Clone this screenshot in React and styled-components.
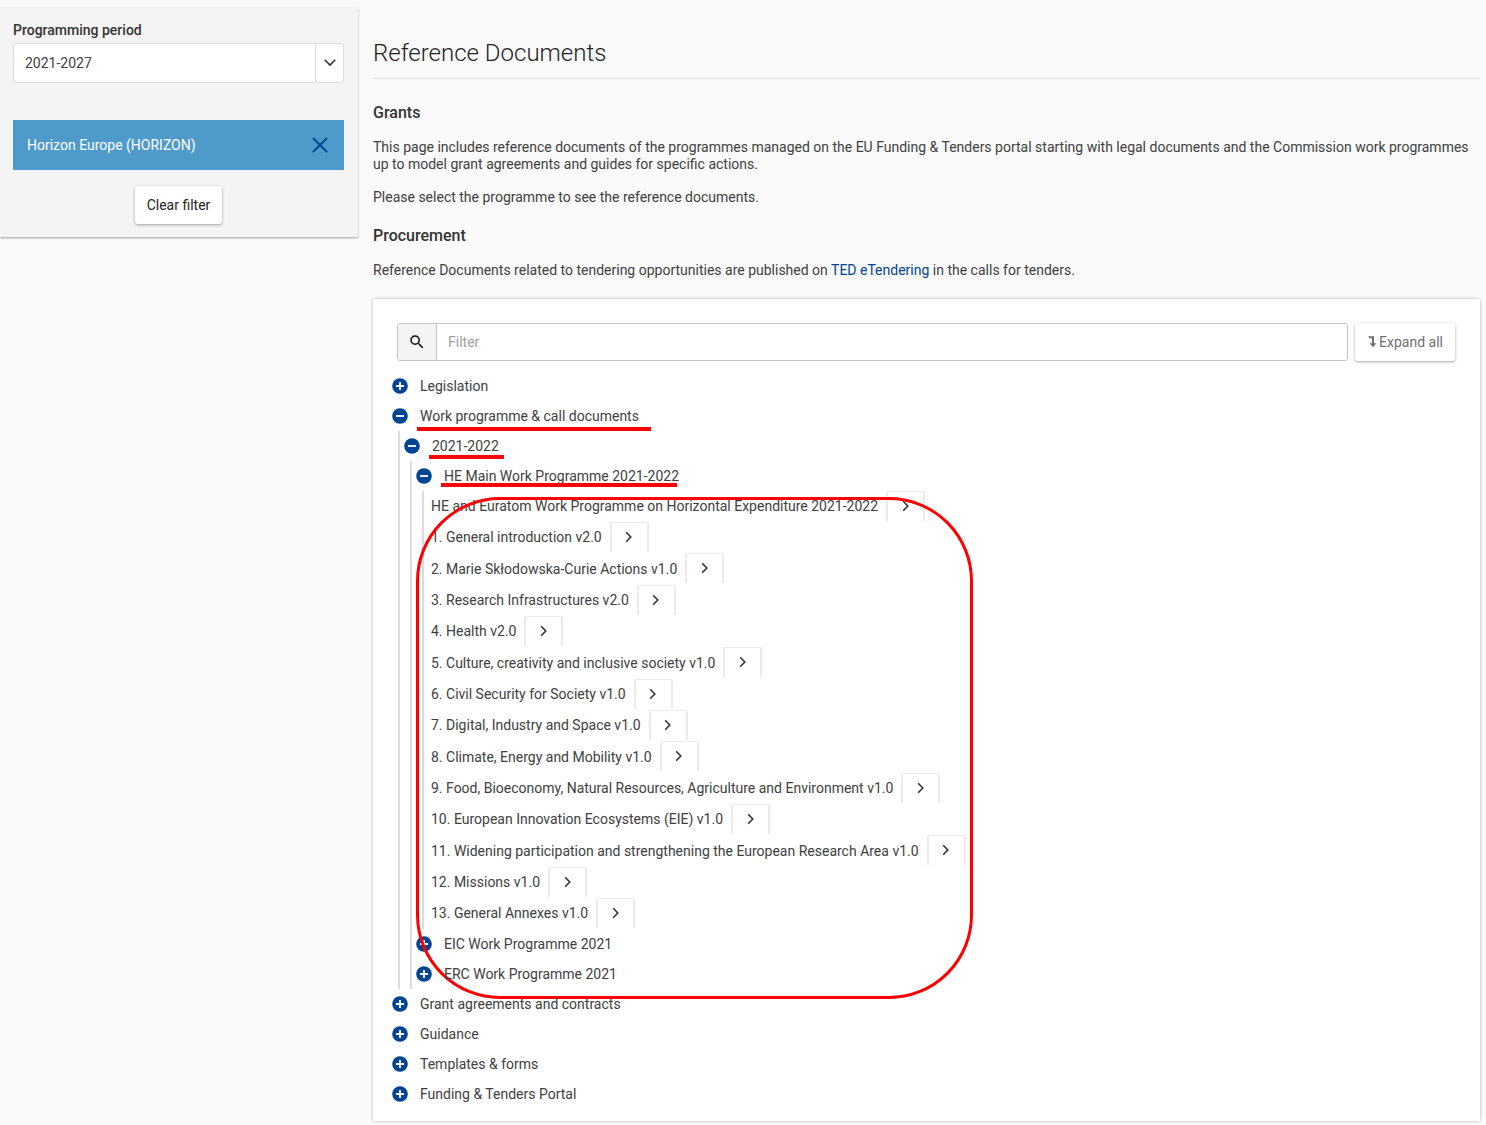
import React, { useState } from "react";
import styled, { createGlobalStyle, css } from "styled-components";

const GlobalStyle = createGlobalStyle`
  *, *::before, *::after { box-sizing: border-box; }
  body {
    margin: 0;
    background: #fafafa;
    color: #404040;
    font: 14px/17px Roboto, "Liberation Sans", sans-serif;
  }
  button, input, select { font: inherit; color: inherit; }
  h1, h2, p, ul { margin: 0; padding: 0; }
  ul { list-style: none; }
`;

const Page = styled.div`
  display: flex;
  align-items: flex-start;
  gap: 15px;
  padding: 8px 6px 4px 0;
`;

const Sidebar = styled.aside`
  flex: 0 0 358px;
  display: flex;
  flex-direction: column;
  padding: 14px 14px 13px 13px;
  background: #f4f4f4;
  box-shadow: 0 1px 2px rgba(0, 0, 0, 0.35);
`;

const FieldLabel = styled.label`
  padding-bottom: 4px;
  font-weight: 500;
  color: #333;
`;

const SelectBox = styled.div`
  display: grid;
  grid-template-columns: 1fr 28px;
  height: 40px;
  background: #fff;
  border: 1px solid #dcdcdc;
  border-radius: 3px;
`;

const Select = styled.select`
  grid-area: 1 / 1 / 2 / 3;
  appearance: none;
  padding: 0 11px;
  background: transparent;
  border: 0;
`;

const SelectArrow = styled.span`
  grid-area: 1 / 2;
  display: grid;
  place-items: center;
  border-left: 1px solid #dcdcdc;
  pointer-events: none;
`;

const Chip = styled.div`
  display: flex;
  align-items: center;
  justify-content: space-between;
  height: 50px;
  margin: 37px 0 16px;
  padding: 0 14px;
  background: #4e9acb;
  color: #fff;
`;

const ChipRemove = styled.button`
  display: grid;
  place-items: center;
  padding: 0;
  background: none;
  border: 0;
  color: #004494;
`;

const Button = styled.button`
  display: flex;
  align-items: center;
  justify-content: center;
  gap: 2px;
  height: 38px;
  padding: 0 12px;
  background: #fff;
  border: 0;
  border-radius: 3px;
  box-shadow: 0 1px 3px rgba(0, 0, 0, 0.35);
  color: ${(p) => (p.$muted ? "#707070" : "#222")};
  align-self: center;
  white-space: nowrap;
`;

const Main = styled.main`
  flex: 1;
  min-width: 0;
  padding-top: 28px;
`;

const Title = styled.h1`
  padding-bottom: 8px;
  border-bottom: 1px solid #dcdcdc;
  font-size: 24px;
  line-height: 34px;
  font-weight: 300;
  color: #222;
`;

const Heading = styled.h2`
  margin: ${(p) => (p.$first ? 24 : 20)}px 0 16px;
  font-size: 16px;
  line-height: 20px;
  font-weight: 500;
  color: #333;
`;

const Text = styled.p`
  & + & { margin-top: 16px; }
`;

const Link = styled.a`
  color: #004494;
  text-decoration: none;
`;

const Card = styled.section`
  margin-top: 20px;
  padding: 24px 25px 12px 24px;
  background: #fff;
  box-shadow: 0 0 3px rgba(0, 0, 0, 0.3);
`;

const Toolbar = styled.div`
  display: flex;
  gap: 7px;
  margin-bottom: 10px;
`;

const Search = styled.div`
  flex: 1;
  display: flex;
  height: 38px;
  border: 1px solid #c4c4c4;
  border-radius: 3px;
  overflow: hidden;
`;

const SearchIcon = styled.label`
  display: grid;
  place-items: center;
  width: 39px;
  background: #f4f4f4;
  border-right: 1px solid #c4c4c4;
  color: #111;
`;

const SearchInput = styled.input`
  flex: 1;
  padding: 0 11px;
  border: 0;
  outline: 0;
  &::placeholder { color: #a0a0a0; opacity: 1; }
`;

const Tree = styled.ul`
  margin-left: -5px;
`;

const Branch = styled.ul`
  position: relative;
  margin-left: 6px;
  padding-left: 4px;
  border-left: 2px solid #dcdcdc;
`;

const NodeButton = styled.button`
  display: flex;
  align-items: center;
  gap: 12px;
  height: 30px;
  padding: 0;
  background: none;
  border: 0;
  text-align: left;
`;

const NodeLabel = styled.span`
  position: relative;
  ${(p) =>
    p.$mark &&
    css`
      &::after {
        content: "";
        position: absolute;
        left: -3px;
        right: ${p.$mark.right}px;
        top: ${p.$mark.top}px;
        height: 4px;
        background: #f00;
      }
    `}
`;

const Leaf = styled.li`
  display: flex;
  align-items: center;
  gap: 8px;
  height: 31px;
  padding-left: 3px;
  overflow: hidden;
  &:nth-child(3n) { height: 32px; }
`;

const LeafButton = styled.button`
  display: grid;
  place-items: center;
  align-self: flex-start;
  flex: 0 0 39px;
  height: 30px;
  padding: 0 0 2px;
  background: #fff;
  border: solid #ebebeb;
  border-width: 1px 2px 0;
  border-radius: 2px 2px 0 0;
`;

const Outline = styled.li`
  position: absolute;
  left: -8px;
  top: 6px;
  width: 557px;
  height: 502px;
  border: 3px solid #f00;
  border-radius: 84px;
  pointer-events: none;
`;

const Chevron = ({ down }) => (
  <svg width="14" height="14" viewBox="0 0 14 14" fill="none" stroke="#333" strokeWidth="1.6" aria-hidden="true">
    <path d={down ? "M1.8 3.8 7 9l5.2-5.2" : "M4.2 2.2 8.8 7l-4.6 4.8"} />
  </svg>
);

const Cross = () => (
  <svg width="20" height="20" viewBox="0 0 20 20" fill="none" stroke="currentColor" strokeWidth="2" aria-hidden="true">
    <path d="M3 3l14 14M17 3 3 17" />
  </svg>
);

const Magnifier = () => (
  <svg width="18" height="18" viewBox="0 0 24 24" fill="currentColor" aria-hidden="true">
    <path d="M15.5 14h-.79l-.28-.27A6.47 6.47 0 0 0 16 9.5 6.5 6.5 0 1 0 9.5 16c1.61 0 3.09-.59 4.23-1.57l.27.28v.79l5 4.99L20.49 19l-4.99-5zm-6 0C7.01 14 5 11.99 5 9.5S7.01 5 9.5 5 14 7.01 14 9.5 11.99 14 9.5 14z" />
  </svg>
);

const LevelDown = () => (
  <svg width="10" height="12" viewBox="0 0 10 12" fill="currentColor" aria-hidden="true">
    <path d="M1 0.3H7V7.3H9.4L6 11.3 2.6 7.3H4.9V2.3H2.6z" />
  </svg>
);

const Toggle = ({ open }) => (
  <svg width="16" height="16" viewBox="0 0 16 16" aria-hidden="true">
    <circle cx="8" cy="8" r="7.8" fill="#004494" />
    <path d={open ? "M4 8h8" : "M4 8h8M8 4v8"} stroke="#fff" strokeWidth="1.8" />
  </svg>
);

const mainProgramme = [
  "HE and Euratom Work Programme on Horizontal Expenditure 2021-2022",
  "1. General introduction v2.0",
  "2. Marie Skłodowska-Curie Actions v1.0",
  "3. Research Infrastructures v2.0",
  "4. Health v2.0",
  "5. Culture, creativity and inclusive society v1.0",
  "6. Civil Security for Society v1.0",
  "7. Digital, Industry and Space v1.0",
  "8. Climate, Energy and Mobility v1.0",
  "9. Food, Bioeconomy, Natural Resources, Agriculture and Environment v1.0",
  "10. European Innovation Ecosystems (EIE) v1.0",
  "11. Widening participation and strengthening the European Research Area v1.0",
  "12. Missions v1.0",
  "13. General Annexes v1.0",
];

const TreeNode = ({ label, mark, children }) => {
  const [open, setOpen] = useState(Boolean(children));
  return (
    <li>
      <NodeButton type="button" aria-expanded={open} onClick={() => setOpen(!open)}>
        <Toggle open={open} />
        <NodeLabel $mark={mark}>{label}</NodeLabel>
      </NodeButton>
      {open && children && <Branch>{children}</Branch>}
    </li>
  );
};

export default function App() {
  return (
    <>
      <GlobalStyle />
      <Page>
        <Sidebar>
          <FieldLabel htmlFor="period">Programming period</FieldLabel>
          <SelectBox>
            <Select id="period" defaultValue="2021-2027">
              <option>2021-2027</option>
            </Select>
            <SelectArrow>
              <Chevron down />
            </SelectArrow>
          </SelectBox>
          <Chip>
            Horizon Europe (HORIZON)
            <ChipRemove type="button" aria-label="Remove">
              <Cross />
            </ChipRemove>
          </Chip>
          <Button type="button">Clear filter</Button>
        </Sidebar>
        <Main>
          <Title>Reference Documents</Title>
          <Heading $first>Grants</Heading>
          <Text>
            This page includes reference documents of the programmes managed on the EU Funding &amp; Tenders portal
            starting with legal documents and the Commission work programmes up to model grant agreements and guides
            for specific actions.
          </Text>
          <Text>Please select the programme to see the reference documents.</Text>
          <Heading>Procurement</Heading>
          <Text>
            Reference Documents related to tendering opportunities are published on <Link href="#ted">TED eTendering</Link>{" "}
            in the calls for tenders.
          </Text>
          <Card>
            <Toolbar>
              <Search>
                <SearchIcon htmlFor="filter" aria-label="Filter">
                  <Magnifier />
                </SearchIcon>
                <SearchInput id="filter" type="text" placeholder="Filter" />
              </Search>
              <Button type="button" $muted>
                <LevelDown />
                Expand all
              </Button>
            </Toolbar>
            <Tree>
              <TreeNode label="Legislation" />
              <TreeNode label="Work programme & call documents" mark={{ top: 19, right: -12 }}>
                <TreeNode label="2021-2022" mark={{ top: 17, right: -5 }}>
                  <TreeNode label="HE Main Work Programme 2021-2022" mark={{ top: 15, right: 2 }}>
                    {mainProgramme.map((name) => (
                      <Leaf key={name}>
                        {name}
                        <LeafButton type="button" aria-label={`Open ${name}`}>
                          <Chevron />
                        </LeafButton>
                      </Leaf>
                    ))}
                    <Outline aria-hidden="true" />
                  </TreeNode>
                  <TreeNode label="EIC Work Programme 2021" />
                  <TreeNode label="ERC Work Programme 2021" />
                </TreeNode>
              </TreeNode>
              <TreeNode label="Grant agreements and contracts" />
              <TreeNode label="Guidance" />
              <TreeNode label="Templates & forms" />
              <TreeNode label="Funding & Tenders Portal" />
            </Tree>
          </Card>
        </Main>
      </Page>
    </>
  );
}
